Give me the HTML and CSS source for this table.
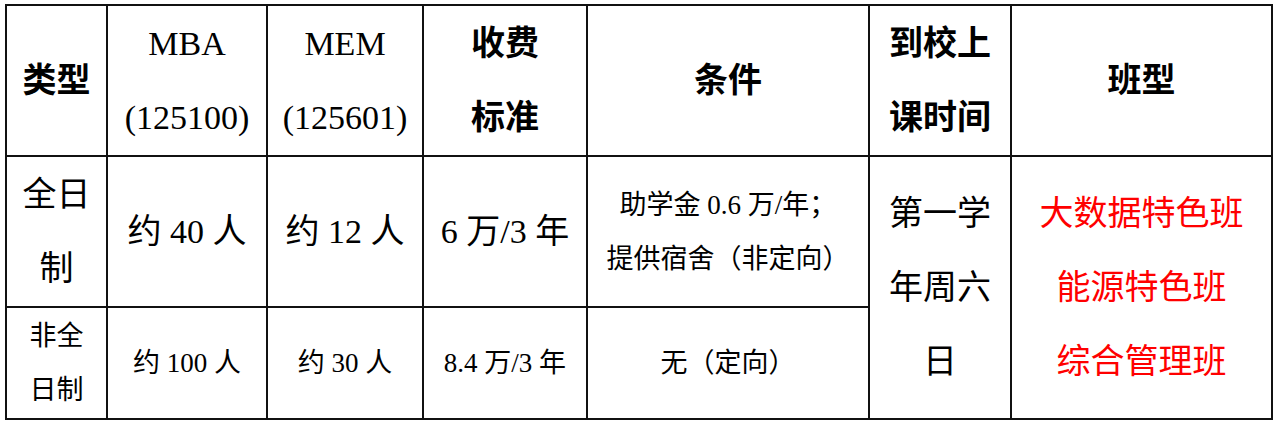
FILE: index.html
```html
<!DOCTYPE html>
<html lang="zh-CN">
<head>
<meta charset="utf-8">
<title>招生信息</title>
<link rel="stylesheet" href="styles.css">
</head>
<body>
<table class="info">
  <colgroup>
    <col class="c1"><col class="c2"><col class="c3"><col class="c4"><col class="c5"><col class="c6"><col class="c7">
  </colgroup>
  <tbody>
    <tr class="r1">
      <th>类型</th>
      <td class="big">MBA<br>(125100)</td>
      <td class="big">MEM<br>(125601)</td>
      <th>收费<br>标准</th>
      <th>条件</th>
      <th>到校上<br>课时间</th>
      <th>班型</th>
    </tr>
    <tr class="r2">
      <td class="big">全日<br>制</td>
      <td class="big">约 40 人</td>
      <td class="big">约 12 人</td>
      <td class="big">6 万/3 年</td>
      <td class="small">助学金 0.6 万/年；<br>提供宿舍（非定向）</td>
      <td class="big" rowspan="2">第一学<br>年周六<br>日</td>
      <td class="big red" rowspan="2">大数据特色班<br>能源特色班<br>综合管理班</td>
    </tr>
    <tr class="r3">
      <td class="small">非全<br>日制</td>
      <td class="small">约 100 人</td>
      <td class="small">约 30 人</td>
      <td class="small">8.4 万/3 年</td>
      <td class="small">无（定向）</td>
    </tr>
  </tbody>
</table>
</body>
</html>
```
FILE: styles.css
```css
body {
  margin: 0;
  background: #ffffff;
  color: #000000;
  font-family: "Liberation Serif", "Noto Sans CJK SC", serif;
}

.info {
  margin: 4px 0 0 5px;
  width: 1268px;
  table-layout: fixed;
  border-collapse: collapse;
}

.c1 { width: 101px; }
.c2 { width: 160px; }
.c3 { width: 156px; }
.c4 { width: 164px; }
.c5 { width: 282px; }
.c6 { width: 142px; }
.c7 { width: 261px; }

.r1 { height: 151px; }
.r2 { height: 151px; }
.r3 { height: 112px; }

.info th,
.info td {
  border: 2px solid #111111;
  padding: 0;
  text-align: center;
  vertical-align: middle;
  font-size: 34px;
  line-height: 74px;
  font-weight: 400;
}

.info th {
  font-weight: 700;
}

.info td.small {
  font-size: 27px;
  line-height: 54px;
}

.info td.red {
  color: #ff0000;
}
```
